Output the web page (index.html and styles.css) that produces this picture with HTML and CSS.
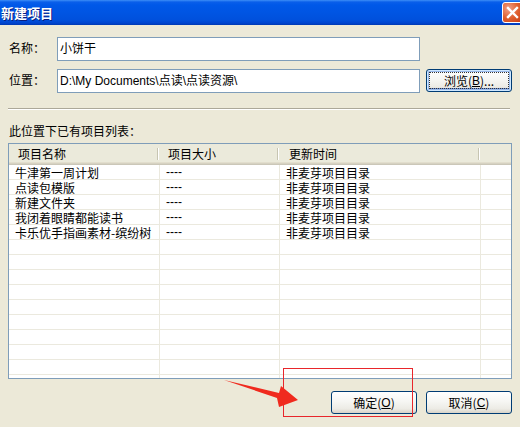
FILE: index.html
```html
<!DOCTYPE html>
<html lang="zh-CN">
<head>
<meta charset="utf-8">
<title>新建项目</title>
<link rel="stylesheet" href="styles.css">
</head>
<body>
<div class="dialog">
  <div class="titlebar">
    <span class="title">新建项目</span>
    <span class="close-btn">
      <svg width="21" height="21" viewBox="0 0 21 21"><path d="M6 6 L15 15 M15 6 L6 15" stroke="#fff" stroke-width="2.4" stroke-linecap="square"/></svg>
    </span>
  </div>
  <div class="content">
    <div class="field-row">
      <span class="label">名称：</span>
      <div class="input">小饼干</div>
    </div>
    <div class="field-row row2">
      <span class="label">位置：</span>
      <div class="input">D:\My Documents\点读\点读资源\</div>
      <button class="btn focused"><span class="focus-rect">浏览(<u>B</u>)...</span></button>
    </div>
    <div class="separator"></div>
    <div class="caption">此位置下已有项目列表：</div>
    <div class="listview">
      <div class="lv-header">
        <div class="hcell">项目名称</div>
        <div class="hcell">项目大小</div>
        <div class="hcell">更新时间</div>
        <div class="hcell last"></div>
      </div>
      <div class="lv-body">
        <div class="row"><div class="cell">牛津第一周计划</div><div class="cell">----</div><div class="cell">非麦芽项目目录</div><div class="cell"></div></div>
        <div class="row"><div class="cell">点读包模版</div><div class="cell">----</div><div class="cell">非麦芽项目目录</div><div class="cell"></div></div>
        <div class="row"><div class="cell">新建文件夹</div><div class="cell">----</div><div class="cell">非麦芽项目目录</div><div class="cell"></div></div>
        <div class="row"><div class="cell">我闭着眼睛都能读书</div><div class="cell">----</div><div class="cell">非麦芽项目目录</div><div class="cell"></div></div>
        <div class="row"><div class="cell">卡乐优手指画素材-缤纷树</div><div class="cell">----</div><div class="cell">非麦芽项目目录</div><div class="cell"></div></div>
        <div class="row"><div class="cell"></div><div class="cell"></div><div class="cell"></div><div class="cell"></div></div>
        <div class="row"><div class="cell"></div><div class="cell"></div><div class="cell"></div><div class="cell"></div></div>
        <div class="row"><div class="cell"></div><div class="cell"></div><div class="cell"></div><div class="cell"></div></div>
        <div class="row"><div class="cell"></div><div class="cell"></div><div class="cell"></div><div class="cell"></div></div>
        <div class="row"><div class="cell"></div><div class="cell"></div><div class="cell"></div><div class="cell"></div></div>
        <div class="row"><div class="cell"></div><div class="cell"></div><div class="cell"></div><div class="cell"></div></div>
        <div class="row"><div class="cell"></div><div class="cell"></div><div class="cell"></div><div class="cell"></div></div>
        <div class="row"><div class="cell"></div><div class="cell"></div><div class="cell"></div><div class="cell"></div></div>
        <div class="row"><div class="cell"></div><div class="cell"></div><div class="cell"></div><div class="cell"></div></div>
        <div class="row"><div class="cell"></div><div class="cell"></div><div class="cell"></div><div class="cell"></div></div>
      </div>
    </div>
    <div class="buttons">
      <button class="btn">确定(<u>O</u>)</button>
      <button class="btn">取消(<u>C</u>)</button>
    </div>
  </div>
  <div class="annot-rect"></div>
  <svg class="annot-arrow" width="520" height="427" viewBox="0 0 520 427">
    <polygon points="224,380 279,393 281,386 298,400 279,407 277,398" fill="#F02A1E"/>
  </svg>
</div>
</body>
</html>
```
FILE: styles.css
```css
html, body {
  margin: 0;
  padding: 0;
}
body {
  width: 520px;
  height: 427px;
  overflow: hidden;
  background: #ECE9D8;
  font-family: "Liberation Sans", "Noto Sans CJK SC", sans-serif;
  font-size: 12px;
  color: #000;
}
.dialog {
  position: relative;
  width: 520px;
  height: 427px;
}
.titlebar {
  height: 25px;
  display: flex;
  align-items: center;
  justify-content: space-between;
  background: linear-gradient(#3D8EF7 0px, #0A5FEA 2px, #0058E8 5px, #0055E3 50%, #0050DC 80%, #0045CF 92%, #0038B2 100%);
}
.title {
  color: #fff;
  font-family: "Noto Sans CJK SC", sans-serif;
  font-weight: bold;
  font-size: 13px;
  padding-left: 1px;
  text-shadow: 1px 1px 0 #0A1F80;
  line-height: 25px;
}
.close-btn {
  width: 21px;
  height: 21px;
  margin-right: -3px;
  box-sizing: border-box;
  border: 1px solid #fff;
  border-radius: 3px;
  background: radial-gradient(circle at 30% 30%, #F0A08A, #E0602F 50%, #C63A10 100%);
  display: flex;
  align-items: center;
  justify-content: center;
}
.close-btn svg {
  display: block;
  margin: -1px;
}
.content {
  padding: 0 8px 0 9px;
}
.field-row {
  display: flex;
  align-items: center;
  margin-top: 12px;
  height: 24px;
}
.field-row.row2 {
  margin-top: 8px;
}
.label {
  width: 48px;
  font-family: "Noto Sans CJK SC", sans-serif;
  margin-top: -3px;
}
.input {
  width: 363px;
  height: 24px;
  box-sizing: border-box;
  border: 1px solid #7F9DB9;
  background: #fff;
  padding: 0 2px;
  line-height: 22px;
  white-space: nowrap;
}
.btn {
  width: 86px;
  height: 23px;
  box-sizing: border-box;
  border: 1px solid #003C74;
  border-radius: 3px;
  background: linear-gradient(#FFFFFF 0%, #F6F6F3 45%, #ECEBE5 80%, #D8D3C8 100%);
  font-family: "Noto Sans CJK SC", sans-serif;
  font-size: 12px;
  color: #000;
  padding: 0;
  display: flex;
  align-items: center;
  justify-content: center;
  line-height: 16px;
}
.btn u {
  font-family: "Liberation Sans", sans-serif;
}
.btn.focused {
  margin-left: 6px;
  margin-top: -1px;
  box-shadow: inset 0 0 0 1px #CEE7FF, inset 0 0 0 2px #98B8EA, inset 0 -2px 0 1px #6A8FD8;
}
.focus-rect {
  display: flex;
  align-items: center;
  justify-content: center;
  width: 78px;
  height: 15px;
  outline: 1px dotted #333;
  outline-offset: 0;
}
.separator {
  margin-top: 15px;
  margin-left: -1px;
  width: 502px;
  height: 1px;
  background: #ACA899;
  border-bottom: 1px solid #FFFFFF;
}
.caption {
  margin-top: 13px;
  font-family: "Noto Sans CJK SC", sans-serif;
  line-height: 16px;
}
.listview {
  margin-top: 4px;
  margin-left: -1px;
  width: 504px;
  height: 236px;
  box-sizing: border-box;
  border: 1px solid #7F9DB9;
  background: #fff;
  overflow: hidden;
}
.lv-header, .row {
  display: grid;
  grid-template-columns: 151px 120px 201px 30px;
}
.lv-header {
  height: 21px;
  background: #EBEADB;
  box-shadow: inset 0 -1px 0 #CBC7B8, inset 0 -2px 0 #D6D2C2, inset 0 -3px 0 #E2DECD;
}
.hcell {
  position: relative;
  padding-left: 9px;
  line-height: 19px;
  font-family: "Noto Sans CJK SC", sans-serif;
}
.hcell:nth-child(2) {
  padding-left: 8px;
}
.hcell::after {
  content: "";
  position: absolute;
  right: 2px;
  top: 4px;
  bottom: 5px;
  width: 1px;
  background: #C7C5B2;
  box-shadow: 1px 0 0 #fff;
}
.hcell.last::after {
  display: none;
}
.row {
  height: 15px;
}
.cell {
  box-shadow: inset -1px -1px 0 #EBE9DE;
  padding-left: 6px;
  line-height: 15px;
  height: 15px;
  white-space: nowrap;
  font-family: "Noto Sans CJK SC", sans-serif;
}
.cell:nth-child(2) {
  font-family: "Liberation Sans", sans-serif;
}
.cell:last-child {
  box-shadow: inset 0 -1px 0 #EBE9DE;
}
.buttons {
  margin-top: 12px;
  display: flex;
  justify-content: flex-end;
  gap: 9px;
}
.annot-rect {
  position: absolute;
  left: 283px;
  top: 368px;
  width: 130px;
  height: 49px;
  box-sizing: border-box;
  border: 1px solid #E8262B;
}
.annot-arrow {
  position: absolute;
  left: 0;
  top: 0;
  pointer-events: none;
}
```
